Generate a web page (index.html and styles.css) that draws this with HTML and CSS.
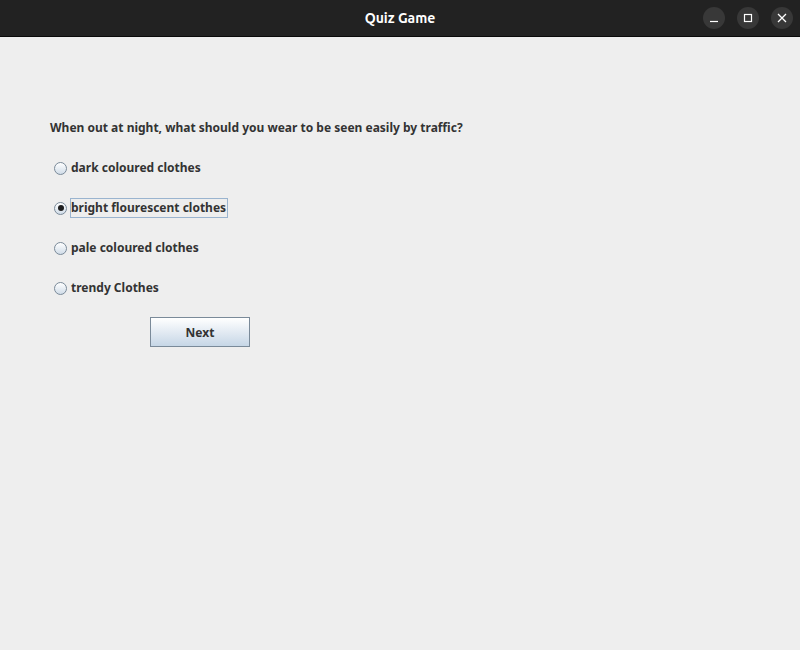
FILE: index.html
```html
<!DOCTYPE html>
<html>
<head>
<meta charset="utf-8">
<link rel="stylesheet" href="styles.css">
</head>
<body>
<div class="window">
  <header class="titlebar">
    <span class="title">Quiz Game</span>
    <div class="controls">
      <span class="ctl"><svg width="10" height="10" viewBox="0 0 10 10"><path d="M1 8.5H9" stroke="#fff" stroke-width="1.2"/></svg></span>
      <span class="ctl"><svg width="10" height="10" viewBox="0 0 10 10"><rect x="1.5" y="1.5" width="7" height="7" fill="none" stroke="#fff" stroke-width="1.2"/></svg></span>
      <span class="ctl"><svg width="10" height="10" viewBox="0 0 10 10"><path d="M1 1L9 9M9 1L1 9" stroke="#fff" stroke-width="1.3"/></svg></span>
    </div>
  </header>
  <main class="content">
    <p class="question">When out at night, what should you wear to be seen easily by traffic?</p>
    <div class="options">
      <label class="option"><span class="radio"></span><span class="label">dark coloured clothes</span></label>
      <label class="option"><span class="radio checked"></span><span class="label focused">bright flourescent clothes</span></label>
      <label class="option"><span class="radio"></span><span class="label">pale coloured clothes</span></label>
      <label class="option"><span class="radio"></span><span class="label">trendy Clothes</span></label>
    </div>
    <div class="actions">
      <button class="next">Next</button>
    </div>
  </main>
</div>
</body>
</html>
```

FILE: styles.css
```css
html, body {
  margin: 0;
  padding: 0;
  width: 800px;
  height: 650px;
  overflow: hidden;
}
.window {
  width: 800px;
  height: 650px;
  background: #eeeeee;
  display: flex;
  flex-direction: column;
  font-family: "Noto Sans", "DejaVu Sans", sans-serif;
}
.titlebar {
  height: 36px;
  background: #222222;
  border-bottom: 1px solid #0a0a0a;
  position: relative;
  display: flex;
  align-items: center;
  justify-content: center;
  flex-shrink: 0;
}
.title {
  color: #ffffff;
  font-family: "Ubuntu", "Noto Sans", sans-serif;
  font-weight: bold;
  font-size: 14px;
}
.controls {
  position: absolute;
  right: 7px;
  top: 7px;
  display: flex;
  gap: 12px;
}
.ctl {
  width: 22px;
  height: 22px;
  border-radius: 50%;
  background: #383838;
  display: flex;
  align-items: center;
  justify-content: center;
}
.content {
  padding: 82px 0 0 50px;
  color: #333333;
  font-size: 12px;
  font-weight: bold;
}
.question {
  margin: 0;
  line-height: 17px;
}
.options {
  display: flex;
  flex-direction: column;
  margin-top: 12px;
  margin-left: 4px;
}
.option {
  display: flex;
  align-items: center;
  height: 40px;
  gap: 3px;
}
.radio {
  width: 11px;
  height: 11px;
  border-radius: 50%;
  border: 1px solid #7a8a99;
  background: linear-gradient(#ffffff, #d0dce8);
  position: relative;
  flex-shrink: 0;
}
.radio.checked::after {
  content: "";
  position: absolute;
  left: 2.5px;
  top: 2.5px;
  width: 6px;
  height: 6px;
  border-radius: 50%;
  background: #1e1e1e;
}
.label {
  padding: 1px 1px 2px 0;
  border: 1px solid transparent;
  line-height: 15px;
}
.label.focused {
  border-color: #9ab4cf;
}
.actions {
  margin-top: 9px;
  padding-left: 100px;
}
.next {
  width: 100px;
  height: 30px;
  border: 1px solid #7a8a99;
  background: linear-gradient(#ffffff, #c6d6e6);
  font-family: "Noto Sans", "DejaVu Sans", sans-serif;
  font-weight: bold;
  font-size: 12px;
  color: #333333;
  padding: 0;
}
```
